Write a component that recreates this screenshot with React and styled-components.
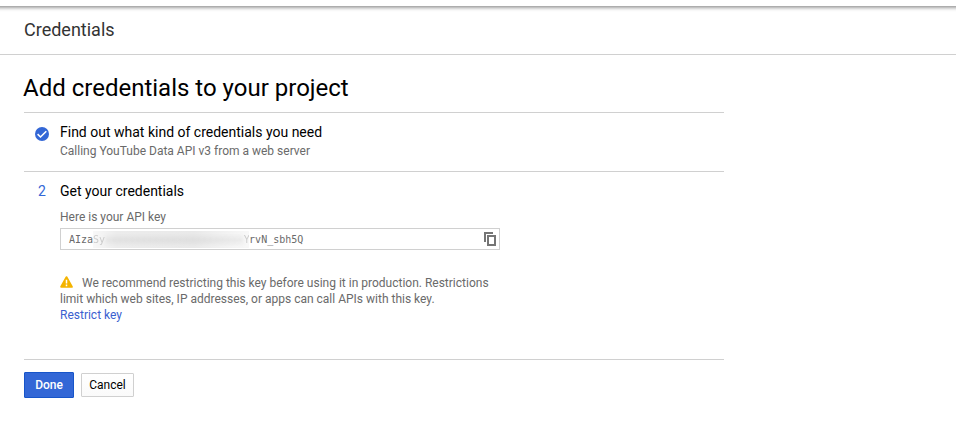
import React from "react";
import styled, { createGlobalStyle } from "styled-components";

const GlobalStyle = createGlobalStyle`
  * { box-sizing: border-box; }
  body {
    margin: 0;
    background: #fff;
    font-family: Roboto, "Liberation Sans", sans-serif;
    font-size: 12px;
    line-height: 16px;
    color: #6a6a6a;
  }
`;

const Page = styled.div`
  height: 448px;
  overflow: hidden;
  padding-top: 6px;
`;

const TopShadow = styled.div`
  height: 6px;
  background: linear-gradient(#adadad 0 1px, #c3c3c3 1px 2px, #dadada 2px 3px, #ececec 3px 4px, #f8f8f8 4px 5px, #fdfdfd 5px 6px);
`;

const Header = styled.header`
  height: 43px;
  padding: 7px 24px 0;
  border-bottom: 1px solid #d0d0d0;
  color: #333;
  font-size: 18px;
  line-height: 22px;
`;

const Content = styled.main`
  width: 700px;
  margin-left: 24px;
`;

const Title = styled.h1`
  margin: 0;
  height: 57px;
  padding-top: 19px;
  color: #000;
  font-size: 24px;
  font-weight: 400;
  line-height: 28px;
  margin-left: -1px;
`;

const Step = styled.section`
  display: flex;
  height: ${(p) => p.$height}px;
  border-top: 1px solid #d0d0d0;
  padding-top: 10px;
`;

const StepMarker = styled.div`
  width: 36px;
  height: 18px;
  line-height: 18px;
  text-align: center;
  color: #3367d6;
  font-size: 14px;
  svg { display: block; margin: 4px 0 0 11px; }
`;

const StepBody = styled.div`
  width: 440px;
`;

const StepTitle = styled.h2`
  margin: 0;
  color: #000;
  font-size: 14px;
  font-weight: 400;
  line-height: 18px;
`;

const Description = styled.div`
  margin-top: 2px;
`;

const FieldLabel = styled.div`
  margin-top: 9px;
`;

const KeyField = styled.div`
  display: flex;
  align-items: center;
  height: 22px;
  margin-top: 3px;
  padding: 0 3px 0 8px;
  border: 1px solid #d0d0d0;
  font-family: "DejaVu Sans Mono", "Liberation Mono", monospace;
  font-size: 10px;
  line-height: 20px;
  svg { display: block; margin-left: auto; }
`;

const KeyText = styled.span`
  padding-top: 2px;
`;

const Redacted = styled.span`
  width: 156px;
  height: 17px;
  overflow: hidden;
  background: linear-gradient(90deg, #f8f8f8, #ececec 15%, #e9e9e9 65%, #f1f1f1 82%, #f8f8f8);
`;

const RedactedText = styled.span`
  display: flex;
  line-height: 18px;
  white-space: nowrap;
  color: #999;
  opacity: 0.45;
`;

const Smudge = styled.span`
  filter: blur(${(p) => p.$blur}px);
`;

const Notice = styled.p`
  margin: 25px 0 0;
  white-space: nowrap;
  svg { margin-right: 9px; vertical-align: -1px; }
`;

const Link = styled.a`
  color: #3b5fd0;
  text-decoration: none;
`;

const Actions = styled.footer`
  display: flex;
  align-items: center;
  gap: 7px;
  padding-top: 12px;
  border-top: 1px solid #d0d0d0;
`;

const Button = styled.button`
  width: ${(p) => (p.$primary ? 50 : 53)}px;
  height: ${(p) => (p.$primary ? 26 : 24)}px;
  padding: 0;
  border: 1px solid ${(p) => (p.$primary ? "#1755c9" : "#d0d0d0")};
  border-radius: 1px;
  background: ${(p) => (p.$primary ? "#3367d6" : "linear-gradient(#fff, #fafafa)")};
  color: ${(p) => (p.$primary ? "#fff" : "#000")};
  font: ${(p) => (p.$primary ? 500 : 400)} 12px/16px Roboto, sans-serif;
`;

const CheckIcon = () => (
  <svg width="14" height="14" viewBox="0 0 14 14">
    <circle cx="7" cy="7" r="7" fill="#3367d6" />
    <path d="M2.6 7.2 5.5 10 11.3 4.2" fill="none" stroke="#fff" strokeWidth="1.6" />
  </svg>
);

const CopyIcon = () => (
  <svg width="12" height="14" viewBox="0 0 12 14" fill="none" stroke="#757575" strokeWidth="2" shapeRendering="crispEdges">
    <path d="M1 10V1H9" />
    <path d="M4 4H11V13H4Z" />
  </svg>
);

const WarningIcon = () => (
  <svg width="13" height="12" viewBox="0 0 13 12">
    <path d="M6.5 1.2 11.8 10.8H1.2Z" fill="#f4b400" stroke="#f4b400" strokeWidth="2" strokeLinejoin="round" />
    <path d="M6.5 3.8V7.4M6.5 8.6V10.2" stroke="#fff" strokeWidth="1.5" />
  </svg>
);

export default function App() {
  return (
    <Page>
      <GlobalStyle />
      <TopShadow />
      <Header>Credentials</Header>
      <Content>
        <Title>Add credentials to your project</Title>
        <Step $height={59}>
          <StepMarker><CheckIcon /></StepMarker>
          <StepBody>
            <StepTitle>Find out what kind of credentials you need</StepTitle>
            <Description>Calling YouTube Data API v3 from a web server</Description>
          </StepBody>
        </Step>
        <Step $height={188}>
          <StepMarker>2</StepMarker>
          <StepBody>
            <StepTitle>Get your credentials</StepTitle>
            <FieldLabel>Here is your API key</FieldLabel>
            <KeyField>
              <KeyText>AIza</KeyText>
              <Redacted>
                <RedactedText>
                  <Smudge $blur={0.5}>Sy</Smudge>
                  <Smudge $blur={2}>xxxxxxxxxxxxxxxxxxxxxxx</Smudge>
                  <Smudge $blur={0.5}>Y</Smudge>
                </RedactedText>
              </Redacted>
              <KeyText>rvN_sbh5Q</KeyText>
              <CopyIcon />
            </KeyField>
            <Notice>
              <WarningIcon />
              We recommend restricting this key before using it in production. Restrictions
              <br />
              limit which web sites, IP addresses, or apps can call APIs with this key.
              <br />
              <Link>Restrict key</Link>
            </Notice>
          </StepBody>
        </Step>
        <Actions>
          <Button $primary>Done</Button>
          <Button>Cancel</Button>
        </Actions>
      </Content>
    </Page>
  );
}
